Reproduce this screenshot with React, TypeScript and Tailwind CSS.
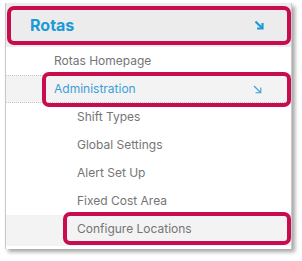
import React from "react";

const Sub = ({ label }: { label: string }) => (
  <div className="h-[28px] flex items-center pl-[71px] text-[12px] text-[#757575]">
    {label}
  </div>
);

export default function App() {
  return (
    <div
      className="relative w-[302px] h-[261px] bg-white overflow-hidden"
      style={{ fontFamily: "Inter, 'Noto Sans', sans-serif" }}
    >
      <div className="ml-[5px] mt-[3px] w-[287px] h-[246px] bg-white border-l border-r border-[#c9c9c9] shadow-[3px_3px_4px_rgba(0,0,0,0.35)]">
        <div className="h-[44px] bg-[#ececec] flex items-center justify-between pl-[24px] pr-[27px]">
          <span className="text-[16px] font-bold text-[#1a9bd7]">Rotas</span>
          <svg width="10" height="10" viewBox="0 0 10 10">
            <path d="M1.5 1.5 L8 8" stroke="#1a9bd7" strokeWidth="2.2" />
            <path d="M3 8.5 H8.5 V3" stroke="#1a9bd7" strokeWidth="2.2" fill="none" />
          </svg>
        </div>
        <div className="h-[28px] flex items-center pl-[48px] text-[12px] text-[#757575]">
          Rotas Homepage
        </div>
        <div className="h-[28px] flex items-center justify-between pl-[48px] pr-[29px] bg-[#f3f3f3] border-y border-dotted border-[#c8c8c8] text-[12px] text-[#3a9fd8]">
          <span>Administration</span>
          <svg width="9" height="9" viewBox="0 0 9 9">
            <path d="M1 1 L7.5 7.5" stroke="#3a9fd8" strokeWidth="1.1" />
            <path d="M2.5 7.8 H7.8 V2.5" stroke="#3a9fd8" strokeWidth="1.1" fill="none" />
          </svg>
        </div>
        <Sub label="Shift Types" />
        <Sub label="Global Settings" />
        <Sub label="Alert Set Up" />
        <Sub label="Fixed Cost Area" />
        <div className="h-[31px] flex items-center pb-[3px] pl-[71px] text-[12px] text-[#757575] bg-[#f3f3f3]">
          Configure Locations
        </div>
      </div>
      <div className="absolute left-[7px] top-[6px] w-[284px] h-[39px] border-[4px] border-[#c80c50] rounded-[7px]" />
      <div className="absolute left-[42px] top-[72px] w-[249px] h-[35px] border-[4px] border-[#c80c50] rounded-[7px]" />
      <div className="absolute left-[63px] top-[212px] w-[228px] h-[33px] border-[4px] border-[#c80c50] rounded-[7px]" />
    </div>
  );
}
